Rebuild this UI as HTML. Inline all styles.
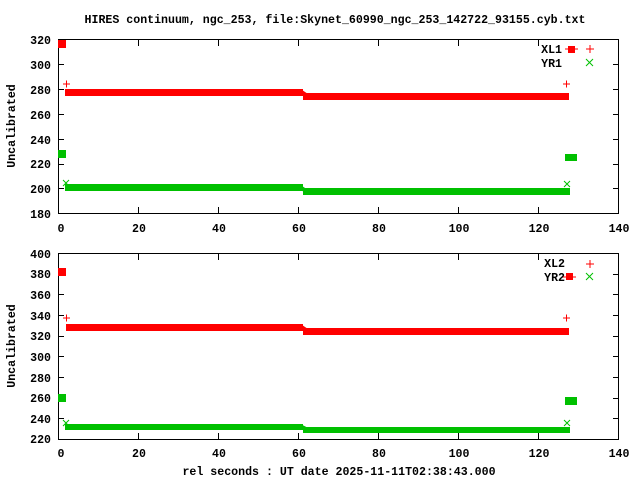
<!DOCTYPE html>
<html><head><style>
html,body{margin:0;padding:0;background:#fff;width:640px;height:480px;overflow:hidden}
svg text{font-family:"Liberation Mono",monospace;font-weight:bold;font-size:11.6px;fill:#000}
</style></head><body>
<svg width="640" height="480" viewBox="0 0 640 480">
<text x="335" y="23" text-anchor="middle">HIRES continuum, ngc_253, file:Skynet_60990_ngc_253_142722_93155.cyb.txt</text>
<!-- TOP PLOT -->
<g stroke="#000" stroke-width="1" fill="none">
<rect x="58.5" y="39.5" width="560" height="174"/>
<path d="M58 64.5h6M58 89.5h6M58 114.5h6M58 139.5h6M58 164.5h6M58 188.5h6M613 64.5h6M613 89.5h6M613 114.5h6M613 139.5h6M613 164.5h6M613 188.5h6"/>
<path d="M138.5 213v-6M218.5 213v-6M298.5 213v-6M378.5 213v-6M458.5 213v-6M538.5 213v-6M138.5 40v6M218.5 40v6M298.5 40v6M378.5 40v6M458.5 40v6M538.5 40v6"/>
</g>
<g text-anchor="end">
<text x="51" y="44">320</text><text x="51" y="69">300</text><text x="51" y="94">280</text><text x="51" y="119">260</text><text x="51" y="144">240</text><text x="51" y="168">220</text><text x="51" y="193">200</text><text x="51" y="218">180</text>
</g>
<g text-anchor="middle">
<text x="61" y="232">0</text><text x="139" y="232">20</text><text x="219" y="232">40</text><text x="299" y="232">60</text><text x="379" y="232">80</text><text x="459" y="232">100</text><text x="539" y="232">120</text><text x="619" y="232">140</text>
</g>
<text transform="translate(15,126) rotate(-90)" text-anchor="middle">Uncalibrated</text>
<g fill="#f00" stroke="#f00">
<rect x="58" y="40" width="8" height="8" stroke="none"/>
<path d="M63 84h7M66.5 80.5v7M563 84h7M566.5 80.5v7" stroke-width="1" fill="none"/>
<rect x="65" y="89" width="238" height="7" stroke="none"/>
<rect x="303" y="93" width="266" height="7" stroke="none"/>
<path d="M300 91l6 4" stroke-width="4"/>
</g>
<g fill="#00c000" stroke="#00c000">
<rect x="58" y="150" width="8" height="8" stroke="none"/>
<path d="M63 180l6 6M69 180l-6 6M564 181l6 6M570 181l-6 6" stroke-width="1" fill="none"/>
<rect x="65" y="184" width="238" height="7" stroke="none"/>
<rect x="303" y="188" width="267" height="7" stroke="none"/>
<path d="M300 187l6 4" stroke-width="4"/>
<rect x="565" y="154" width="12" height="7" stroke="none"/>
</g>
<text x="562" y="53" text-anchor="end">XL1</text>
<text x="562" y="67" text-anchor="end">YR1</text>
<path d="M565 49h13" stroke="#f00"/><rect x="568" y="46" width="7" height="7" fill="#f00"/>
<path d="M586 49h8M590 45v8" stroke="#f00"/>
<path d="M586 59l7 7M593 59l-7 7" stroke="#00c000"/>
<!-- BOTTOM PLOT -->
<g stroke="#000" stroke-width="1" fill="none">
<rect x="58.5" y="253.5" width="560" height="186"/>
<path d="M58 274.5h6M58 294.5h6M58 315.5h6M58 336.5h6M58 356.5h6M58 377.5h6M58 398.5h6M58 418.5h6M613 274.5h6M613 294.5h6M613 315.5h6M613 336.5h6M613 356.5h6M613 377.5h6M613 398.5h6M613 418.5h6"/>
<path d="M138.5 439v-6M218.5 439v-6M298.5 439v-6M378.5 439v-6M458.5 439v-6M538.5 439v-6M138.5 254v6M218.5 254v6M298.5 254v6M378.5 254v6M458.5 254v6M538.5 254v6"/>
</g>
<g text-anchor="end">
<text x="51" y="258">400</text><text x="51" y="278">380</text><text x="51" y="299">360</text><text x="51" y="320">340</text><text x="51" y="340">320</text><text x="51" y="361">300</text><text x="51" y="382">280</text><text x="51" y="402">260</text><text x="51" y="423">240</text><text x="51" y="443">220</text>
</g>
<g text-anchor="middle">
<text x="61" y="457">0</text><text x="139" y="457">20</text><text x="219" y="457">40</text><text x="299" y="457">60</text><text x="379" y="457">80</text><text x="459" y="457">100</text><text x="539" y="457">120</text><text x="619" y="457">140</text>
</g>
<text transform="translate(15,346) rotate(-90)" text-anchor="middle">Uncalibrated</text>
<text x="339" y="475" text-anchor="middle">rel seconds : UT date 2025-11-11T02:38:43.000</text>
<g fill="#f00" stroke="#f00">
<rect x="58" y="268" width="8" height="8" stroke="none"/>
<path d="M63 318h7M66.5 314.5v7M563 318h7M566.5 314.5v7" stroke-width="1" fill="none"/>
<rect x="66" y="324" width="237" height="7" stroke="none"/>
<rect x="303" y="328" width="266" height="7" stroke="none"/>
<path d="M300 326l6 4" stroke-width="4"/>
</g>
<g fill="#00c000" stroke="#00c000">
<rect x="58" y="394" width="8" height="8" stroke="none"/>
<path d="M63 420l6 6M69 420l-6 6M564 420l6 6M570 420l-6 6" stroke-width="1" fill="none"/>
<rect x="65" y="424" width="238" height="6" stroke="none"/>
<rect x="303" y="427" width="267" height="6" stroke="none"/>
<path d="M300 426l6 3" stroke-width="4"/>
<rect x="565" y="397" width="12" height="8" stroke="none"/>
</g>
<text x="565" y="267" text-anchor="end">XL2</text>
<text x="565" y="281" text-anchor="end">YR2</text>
<path d="M586 264h8M590 260v8" stroke="#f00"/>
<path d="M563 277h13" stroke="#f00"/><rect x="566" y="273" width="7" height="7" fill="#f00"/>
<path d="M586 273l7 7M593 273l-7 7" stroke="#00c000"/>
</svg>
</body></html>
